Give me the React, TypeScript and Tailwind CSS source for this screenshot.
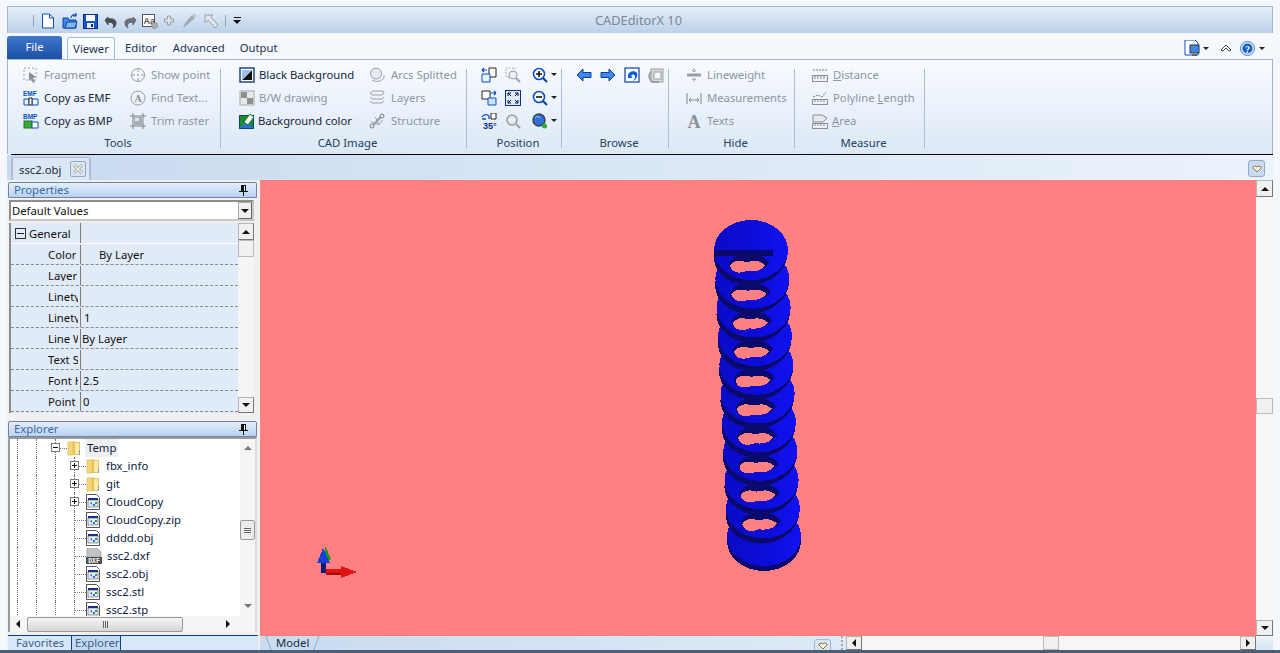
import type { ReactNode } from "react";

const FONT = "font-['Noto_Sans','Open_Sans',sans-serif]";

// --- small drawn icons ---
function Ic({ children, w = 16 }: { children: ReactNode; w?: number }) {
  return (
    <svg width={w} height={16} viewBox={`0 0 ${w} 16`} className="shrink-0" fill="none">
      {children}
    </svg>
  );
}

const G = "#9a9fa6";
const B = "#0a4fc4";

const icons: Record<string, ReactNode> = {
  fragment: (
    <>
      <rect x="1" y="1" width="12" height="12" stroke={G} strokeDasharray="2 2" />
      <path d="M6 5l7 5-3 1 2 4-2 1-2-4-2 2z" fill="#8b8f96" />
    </>
  ),
  emf: (
    <>
      <text x="0" y="6" fontSize="6.5" fontWeight="700" fill={B} fontFamily="Liberation Sans">EMF</text>
      <path d="M1 9h5v6H1zM9 9h6v6H9zM6 12h3" stroke={B} />
      <path d="M6 8h3v7H6z" fill="#fff" stroke="#222" />
    </>
  ),
  bmp: (
    <>
      <text x="0" y="6" fontSize="6.5" fontWeight="700" fill={B} fontFamily="Liberation Sans">BMP</text>
      <rect x="1" y="8" width="8" height="7" fill="#3da83a" stroke="#1a7a1a" />
      <path d="M9 9h6v6H9z" stroke={B} fill="#fff" />
    </>
  ),
  point: (
    <>
      <circle cx="8" cy="8" r="6.5" stroke={G} />
      <path d="M8 1v4M8 11v4M1 8h4M11 8h4" stroke={G} />
      <circle cx="8" cy="8" r="1" fill={G} />
    </>
  ),
  find: (
    <>
      <circle cx="8" cy="8" r="7" stroke={G} />
      <circle cx="8" cy="8" r="5.5" fill="#eef2f7" />
      <text x="8" y="12" textAnchor="middle" fontSize="10" fontWeight="700" fill="#8b8f96" fontFamily="Liberation Serif">A</text>
    </>
  ),
  trim: (
    <>
      <path d="M3 0v16M13 0v16M0 3h16M0 13h16" stroke="#7e8388" />
      <rect x="4" y="4" width="8" height="8" fill="#a8adb3" />
      <rect x="5" y="5" width="4" height="3" fill="#e4e7ea" />
    </>
  ),
  black: (
    <>
      <rect x="1" y="1" width="14" height="14" fill="#fff" stroke="#123a7c" strokeWidth="1.4" />
      <path d="M3 13L13 3v10z" fill="#111" />
      <path d="M3 3h10L3 13z" fill="#9cc0ee" />
    </>
  ),
  bw: (
    <>
      <rect x="1" y="1" width="14" height="14" fill="#e8e8e8" stroke="#a5a8ac" />
      <rect x="2" y="2" width="6" height="6" fill="#8d8f92" />
      <rect x="8" y="8" width="6" height="6" fill="#8d8f92" />
    </>
  ),
  bgcolor: (
    <>
      <rect x="0.5" y="2.5" width="14" height="13" fill="#1d8a2e" stroke="#0a3f9c" />
      <path d="M1 15l6-6 7 6z" fill="#2f6fd8" />
      <path d="M5 9l6-8 4 3-6 8z" fill="#fff" stroke="#1a7a1a" />
    </>
  ),
  arcs: (
    <>
      <circle cx="7" cy="6.5" r="5.5" fill="#e6eaee" stroke={G} />
      <path d="M3 13c3 2 8 2 11-1 1-1 1-2 1-4" stroke={G} />
    </>
  ),
  layers: (
    <>
      <path d="M1 3l3-2h10l1 2-2 2H3z M1 7l2 2h10l2-2M1 11l2 2h10l2-2" stroke={G} fill="#eef1f5" />
    </>
  ),
  structure: (
    <>
      <path d="M1 14C5 14 11 2 15 2" stroke={G} strokeWidth="2" />
      <path d="M2 9c3 0 9 6 11-2M6 4c2 2 3 6 4 8" stroke={G} />
      <circle cx="3" cy="13" r="2" fill="#e6eaee" stroke="#7e8388" />
      <circle cx="13" cy="3" r="2" fill="#e6eaee" stroke="#7e8388" />
    </>
  ),
  pos1: (
    <>
      <path d="M8 1h7v9H8z" fill="#fff" stroke="#222" />
      <path d="M1 7h8v8H1z" fill="#e6f1ff" stroke={B} />
      <path d="M1 3h5M1 3l2-2M1 3l2 2" stroke={B} strokeWidth="1.2" />
    </>
  ),
  pos2: (
    <>
      <path d="M1 1h8v8H1z" fill="#fff" stroke="#222" />
      <path d="M7 8h8v7H7z" fill="#cfe2fb" stroke={B} />
      <path d="M10 3h5M15 3l-2-2M15 3l-2 2" stroke={B} strokeWidth="1.2" />
    </>
  ),
  pos3: (
    <>
      <path d="M10 0h5v6h-5z" fill="#fff" stroke="#222" />
      <path d="M1 4c2-3 5-3 7-1M1 6l4 0M8 3v3" stroke={B} strokeWidth="1.3" />
      <text x="2" y="15.5" fontSize="9" fontWeight="700" fill="#0a2f8c" fontFamily="Liberation Sans">35°</text>
    </>
  ),
  zwin: (
    <>
      <rect x="1" y="1" width="9" height="9" stroke={G} strokeDasharray="1.5 1.5" />
      <circle cx="8" cy="8" r="4" fill="#edf1f5" stroke={G} />
      <path d="M11 11l4 4" stroke={G} strokeWidth="2" />
    </>
  ),
  fit: (
    <>
      <rect x="0.5" y="0.5" width="15" height="15" fill="#dbe9fb" stroke="#0a2f8c" />
      <path d="M3 3l3 3M3 3h3M3 3v3M13 3l-3 3M13 3h-3M13 3v3M3 13l3-3M3 13h3M3 13v-3M13 13l-3-3M13 13h-3M13 13v-3" stroke="#111" />
    </>
  ),
  zprev: (
    <>
      <circle cx="7" cy="7" r="5" fill="#e4e7ea" stroke={G} strokeWidth="1.6" />
      <path d="M11 11l4 4" stroke={G} strokeWidth="2" />
      <path d="M4 7h6l-2-2" stroke="#fff" />
    </>
  ),
  zin: (
    <>
      <circle cx="7" cy="7" r="5.5" fill="#fff" stroke={B} strokeWidth="1.6" />
      <path d="M4 7h6M7 4v6" stroke="#111" strokeWidth="1.6" />
      <path d="M11 11l4 4" stroke="#0a3f9c" strokeWidth="2.2" />
    </>
  ),
  zout: (
    <>
      <circle cx="7" cy="7" r="5.5" fill="#fff" stroke={B} strokeWidth="1.6" />
      <path d="M4 7h6" stroke="#111" strokeWidth="1.6" />
      <path d="M11 11l4 4" stroke="#0a3f9c" strokeWidth="2.2" />
    </>
  ),
  zglobe: (
    <>
      <circle cx="7" cy="7" r="6" fill="#2f6fd8" stroke="#3a3f46" strokeWidth="1.4" />
      <path d="M3 5c2-2 4-2 5 0" stroke="#bcd6f8" />
      <path d="M11 11l3 3" stroke="#3a3f46" strokeWidth="2" />
      <circle cx="12.5" cy="13" r="2.5" fill="#2fb02f" />
    </>
  ),
  left: <path d="M1 8l6-6v3.5h8v5H7V14z" fill="#3f86e6" stroke="#0a3f9c" />,
  right: <path d="M15 8L9 2v3.5H1v5h8V14z" fill="#3f86e6" stroke="#0a3f9c" />,
  back: (
    <>
      <rect x="1" y="1" width="14" height="14" fill="#fff" stroke="#0a3f9c" strokeWidth="1.2" />
      <path d="M4 9c0-5 7-6 9-3 1 3-1 7-4 8 2-2 3-5 1-6-1-1-2 0-3 1l2 2H4z" fill="#0a5fd8" />
    </>
  ),
  fwd: (
    <>
      <rect x="3" y="2" width="12" height="13" fill="#d6d9dd" stroke={G} />
      <path d="M3 5c-3 3-2 8 2 10h6" stroke={G} strokeWidth="2" />
      <rect x="6" y="5" width="7" height="7" fill="#f3f5f7" stroke={G} />
    </>
  ),
  lweight: (
    <>
      <path d="M1 8h14" stroke={G} strokeWidth="3" />
      <path d="M8 1v4M6 3l2 2 2-2M8 15v-4M6 13l2-2 2 2" stroke={G} />
    </>
  ),
  measure: <path d="M1 3v11M15 3v11M3 10h10M3 10l2-2M3 10l2 2M13 10l-2-2M13 10l-2 2" stroke="#83878d" />,
  texts: (
    <text x="8" y="15" textAnchor="middle" fontSize="18" fontWeight="700" fill="#8b8f96" fontFamily="Liberation Serif">A</text>
  ),
  distance: (
    <>
      <path d="M1 3h14" stroke="#777" strokeDasharray="2 1" />
      <rect x="0.5" y="8.5" width="15" height="6" fill="#eef1f5" stroke="#8b8f96" />
      <path d="M3 9v3M6 9v3M9 9v3M12 9v3" stroke="#8b8f96" />
    </>
  ),
  polyline: (
    <>
      <path d="M1 7l5-2 4 2 4-5" stroke="#777" strokeDasharray="2 1" />
      <rect x="0.5" y="9.5" width="15" height="5" fill="#eef1f5" stroke="#8b8f96" />
      <path d="M3 10v2M6 10v2M9 10v2M12 10v2" stroke="#8b8f96" />
    </>
  ),
  area: (
    <>
      <path d="M1 2h9l5 3-4 4H1z" fill="#e6e9ed" stroke="#8b8f96" />
      <rect x="0.5" y="10.5" width="15" height="5" fill="#eef1f5" stroke="#8b8f96" />
      <path d="M3 11v2M6 11v2M9 11v2M12 11v2" stroke="#8b8f96" />
    </>
  ),
};

function Icon({ name }: { name: string }) {
  return <Ic>{icons[name]}</Ic>;
}

function DropTri({ cls = "ml-[3px]" }: { cls?: string }) {
  return <span className={`h-0 w-0 shrink-0 border-x-[3px] border-t-[3px] border-x-transparent border-t-[#222] ${cls}`} />;
}

function Item({ icon, label, off, gap = "gap-[5px]" }: { icon: string; label: ReactNode; off?: boolean; gap?: string }) {
  return (
    <div className={`flex h-[23px] items-center whitespace-nowrap ${gap} ${off ? "text-[#8d96a3]" : "text-[#17263a]"}`}>
      <Icon name={icon} />
      <span>{label}</span>
    </div>
  );
}

function Group({ title, width, pl, children }: { title: string; width: string; pl: string; children: ReactNode }) {
  return (
    <>
      <div className={`flex shrink-0 flex-col ${width}`}>
        <div className={`flex h-[74px] ${pl}`}>{children}</div>
        <div className="flex h-[18px] items-center justify-center pl-[8px] text-[#24405f]">{title}</div>
      </div>
      <div className="mb-[6px] mt-[9px] w-px shrink-0 bg-[#a9bdd3]" />
    </>
  );
}

function Col({ width, children }: { width?: string; children: ReactNode }) {
  return <div className={`flex flex-col ${width ?? ""}`}>{children}</div>;
}

// --- scroll bars ---
function Arrow({ dir, off }: { dir: "up" | "down" | "left" | "right"; off?: boolean }) {
  const c = off ? "#777" : "#111";
  const d = { up: "M4 0l4 4H0z", down: "M0 0h8L4 4z", left: "M4 0v8L0 4z", right: "M0 0v8l4-4z" }[dir];
  const s = dir === "up" || dir === "down" ? [8, 4] : [4, 8];
  return (
    <svg width={s[0]} height={s[1]} viewBox={`0 0 ${s[0]} ${s[1]}`}>
      <path d={d} fill={c} />
    </svg>
  );
}

function SBtn({ dir, cls }: { dir: "up" | "down" | "left" | "right"; cls: string }) {
  return (
    <div className={`flex shrink-0 items-center justify-center border border-[#b5b5b5] border-b-[#777] border-r-[#777] bg-[#f0f0f0] ${cls}`}>
      <Arrow dir={dir} />
    </div>
  );
}

// --- left panel ---
function PanelHead({ title }: { title: string }) {
  return (
    <div className="ml-px flex h-[16px] w-[249px] items-center justify-between rounded-t-[2px] border border-[#71849c] bg-gradient-to-b from-[#e3eefb] to-[#b9d2f2] pl-[5px] pr-[8px] text-[#3a6ba5]">
      <span>{title}</span>
      <svg width="9" height="11" viewBox="0 0 9 11">
        <path d="M2 0h5v6h2v1H5v4H4V7H0V6h2z" fill="#111" />
        <path d="M5 1h1v5H5z" fill="#fff" />
      </svg>
    </div>
  );
}

const props: [string, string, string?][] = [
  ["Color", "By Layer", "pl-[18px]"],
  ["Layer", ""],
  ["Linetype", ""],
  ["Linetype scale", "1", "pl-[3px]"],
  ["Line Weight", "By Layer"],
  ["Text Style", ""],
  ["Font Height", "2.5", "pl-[2px]"],
  ["Point display", "0", "pl-[2px]"],
];

function FolderIc() {
  return (
    <svg width="14" height="16" viewBox="0 0 14 16" className="shrink-0">
      <path d="M1 2h5v13H1z" fill="#f5d77a" stroke="#d8b04a" strokeWidth="0.6" />
      <path d="M6 1l3 1h4v13H6z" fill="#e9c25a" />
      <path d="M8 3h4v11H8z" fill="#fbe9a8" />
      <path d="M12 10h1v5h-1z" fill="#7a9cc6" />
    </svg>
  );
}

function ObjIc() {
  return (
    <svg width="14" height="16" viewBox="0 0 14 16" className="shrink-0">
      <path d="M0.5 0.5h10l3 3v12H0.5z" fill="#fff" stroke="#555" />
      <rect x="2" y="4" width="10" height="2" fill="#1a2f8c" />
      <rect x="2" y="6" width="10" height="7" fill="#e8eef8" stroke="#333" strokeWidth="0.5" />
      <path d="M4 9l2-1v3zM7 10h2v2H7z" fill="#1d6fd8" />
      <path d="M9 8h2v2H9z" fill="#2aa02a" />
    </svg>
  );
}

function DxfIc() {
  return (
    <svg width="16" height="16" viewBox="0 0 16 16" className="shrink-0">
      <path d="M1 0h10l4 4v5H1z" fill="#c2c4c7" stroke="#8a8c90" strokeWidth="0.6" />
      <rect x="0" y="9" width="16" height="7" fill="#4c4e52" />
      <text x="8" y="15" textAnchor="middle" fontSize="6.5" fontWeight="700" fill="#fff" fontFamily="Liberation Mono">DXF</text>
    </svg>
  );
}

function TreeRow({ depth, exp, kind, label, sel }: { depth: number; exp?: "+" | "-"; kind: "folder" | "obj" | "dxf"; label: string; sel?: boolean }) {
  return (
    <div className="flex h-[18px] shrink-0 items-center pl-[7px]">
      {Array.from({ length: depth }).map((_, i) => (
        <div key={i} className="h-full w-[19px] shrink-0 border-l border-dotted border-[#777]" />
      ))}
      <div className="relative h-full w-[12px] shrink-0 border-l border-dotted border-[#777]">
        <div className="mt-[9px] w-full border-t border-dotted border-[#777]" />
        {exp && (
          <div className="absolute left-[-5px] top-[4px] flex h-[9px] w-[9px] items-center justify-center border border-[#777] bg-white">
            <div className="h-px w-[5px] bg-[#111]" />
            {exp === "+" && <div className="absolute h-[5px] w-px bg-[#111]" />}
          </div>
        )}
      </div>
      {kind === "folder" && <FolderIc />}
      {kind === "obj" && <ObjIc />}
      {kind === "dxf" && <DxfIc />}
      <span className={`whitespace-nowrap text-[#0b1c3f] ${sel ? "ml-[4px] bg-[#efefef] px-[2px] py-[3px]" : kind === "dxf" ? "ml-[5px]" : "ml-[6px]"}`}>{label}</span>
    </div>
  );
}

function LeftPanel() {
  return (
    <div className="flex w-[253px] shrink-0 flex-col bg-[#f0f0f0] pt-[2px]">
      <PanelHead title="Properties" />
      <div className="ml-[2px] mt-[2px] flex h-[21px] w-[245px] items-center justify-between border-2 border-[#8d8d8d] border-b-[#c8c8c8] border-r-[#c8c8c8] bg-white pl-[1px] text-[#111]">
        <span>Default Values</span>
        <div className="flex h-[17px] w-[14px] items-center justify-center border border-[#aaa] border-b-[#666] border-r-[#666] bg-[#f0f0f0]">
          <Arrow dir="down" />
        </div>
      </div>
      <div className="ml-[2px] mt-[2px] flex h-[190px] w-[245px] border-l-2 border-[#8d8d8d]">
        <div className="flex w-[227px] flex-col bg-[#e1ebf7]">
          <div className="flex h-[21px] shrink-0 border-b border-white">
            <div className="flex w-[70px] shrink-0 items-center gap-[3px] border-r border-[#7d7d7d] pl-[4px] pt-px text-[#111]">
              <div className="flex h-[11px] w-[11px] items-center justify-center border border-[#333]">
                <div className="h-px w-[7px] bg-[#222]" />
              </div>
              General
            </div>
          </div>
          {props.map(([name, value, cls]) => (
            <div key={name} className="flex h-[21px] shrink-0 border-b border-dashed border-[#858b93] pt-px text-[#111]">
              <div className="flex w-[70px] shrink-0 items-center border-r border-[#7d7d7d] pl-[37px] pr-[2px]">
                <span className="min-w-0 overflow-hidden whitespace-nowrap">{name}</span>
              </div>
              <div className={`flex items-center pl-[1px] ${cls ?? ""}`}>{value}</div>
            </div>
          ))}
        </div>
        <div className="flex w-[16px] flex-col bg-[#f5f5f5]">
          <SBtn dir="up" cls="h-[17px]" />
          <div className="h-[17px] shrink-0 border border-[#bbb] bg-[#f0f0f0]" />
          <div className="flex-1" />
          <SBtn dir="down" cls="h-[16px]" />
        </div>
      </div>
      <div className="mt-[8px]">
        <PanelHead title="Explorer" />
      </div>
      <div className="ml-px flex h-[195px] w-[249px] flex-col border-2 border-b-0 border-[#9a9a9a] border-r-[#ddd] bg-white">
        <div className="flex h-[177px] shrink-0">
          <div className="flex w-[230px] flex-col overflow-hidden">
            <TreeRow depth={2} exp="-" kind="folder" label="Temp" sel />
            <TreeRow depth={3} exp="+" kind="folder" label="fbx_info" />
            <TreeRow depth={3} exp="+" kind="folder" label="git" />
            <TreeRow depth={3} exp="+" kind="obj" label="CloudCopy" />
            <TreeRow depth={3} kind="obj" label="CloudCopy.zip" />
            <TreeRow depth={3} kind="obj" label="dddd.obj" />
            <TreeRow depth={3} kind="dxf" label="ssc2.dxf" />
            <TreeRow depth={3} kind="obj" label="ssc2.obj" />
            <TreeRow depth={3} kind="obj" label="ssc2.stl" />
            <TreeRow depth={3} kind="obj" label="ssc2.stp" />
          </div>
          <div className="flex w-[15px] flex-col items-center bg-[#f5f5f5] pt-[7px]">
            <Arrow dir="up" off />
            <div className="mt-[70px] flex h-[20px] w-[15px] flex-col items-center justify-center gap-px rounded-[2px] border border-[#999] bg-[#ececec]">
              <div className="h-px w-[7px] bg-[#666]" />
              <div className="h-px w-[7px] bg-[#666]" />
              <div className="h-px w-[7px] bg-[#666]" />
            </div>
            <div className="flex-1" />
            <div className="mb-[8px]">
              <Arrow dir="down" off />
            </div>
          </div>
        </div>
        <div className="flex h-[16px] shrink-0 items-center bg-[#f5f5f5] pl-[6px] pr-[25px]">
          <Arrow dir="left" />
          <div className="ml-[7px] flex h-[15px] w-[156px] items-center justify-center gap-px rounded-[2px] border border-[#999] bg-gradient-to-b from-[#f5f5f5] to-[#d6d6d6]">
            <div className="h-[7px] w-px bg-[#666]" />
            <div className="h-[7px] w-px bg-[#666]" />
            <div className="h-[7px] w-px bg-[#666]" />
          </div>
          <div className="flex-1" />
          <Arrow dir="right" />
        </div>
      </div>
      <div className="ml-px mt-[3px] flex h-[15px] w-[250px] border-t border-[#0d3f9f] bg-[#d8e7f9] text-[#3a5f8f]">
        <div className="flex w-[63px] items-center pl-[8px]">Favorites</div>
        <div className="flex w-[50px] items-center border-x border-[#0d3f9f] bg-[#c4daf3] pl-[3px]">Explorer</div>
      </div>
    </div>
  );
}

// --- the model on the canvas ---
function Spring() {
  const coils = Array.from({ length: 10 }, (_, i) => i);
  return (
    <svg viewBox="260 180 996 456" className="h-full w-full" shapeRendering="crispEdges">
      <defs>
        <linearGradient id="coil" x1="0" x2="1" y1="0" y2="0">
          <stop offset="0" stopColor="#0b0bc8" />
          <stop offset="0.6" stopColor="#0d0ddc" />
          <stop offset="1" stopColor="#1212f2" />
        </linearGradient>
      </defs>
      <ellipse cx="764" cy="541" rx="37" ry="30" fill="#0a0a6e" />
      <ellipse cx="764" cy="536" rx="37" ry="30" fill="url(#coil)" />
      {coils
        .slice()
        .reverse()
        .map((i) => {
          const cx = 751 + i * 1.33;
          const cy = 250 + i * 28.7;
          return (
            <g key={i}>
              <ellipse cx={cx - 1} cy={cy + 5} rx="37" ry="30" fill="#0a0a6e" transform={`rotate(-8 ${cx} ${cy})`} />
              <ellipse cx={cx} cy={cy} rx="37" ry="30" fill="url(#coil)" />
              <path d={`M${cx - 22} ${cy + 16} A20 11 0 0 1 ${cx + 18} ${cy + 14} L${cx + 13} ${cy + 18} L${cx - 20} ${cy + 20}z`} fill="#0a0a6e" />
              <path
                d={`M${cx - 21} ${cy + 16} C${cx - 18} ${cy + 10} ${cx - 10} ${cy + 10} ${cx - 5} ${cy + 12} C${cx} ${cy + 12} ${cx + 5} ${cy + 8} ${cx + 14} ${cy + 15} C${cx + 11} ${cy + 21} ${cx + 3} ${cy + 22} ${cx - 4} ${cy + 21} C${cx - 12} ${cy + 24} ${cx - 19} ${cy + 23} ${cx - 21} ${cy + 16}z`}
                fill="#ff8080"
              />
            </g>
          );
        })}
      <rect x="714" y="250" width="59" height="6" fill="#0a0a6e" />
      {/* axis gizmo */}
      <path d="M325 546l6 13-5 2z" fill="#0e9a1e" />
      <path d="M323 548l7 15h-13z" fill="#1840d8" />
      <rect x="321" y="563" width="5" height="10" fill="#0a1e78" />
      <path d="M326 569h15v-3l16 6-16 6v-3h-15z" fill="#e01414" />
      <path d="M326 573h15v2h-15z" fill="#a00e0e" />
    </svg>
  );
}

export default function App() {
  return (
    <div className={`flex h-[653px] w-[1280px] flex-col overflow-hidden bg-[#f4f7fc] text-[11.3px] leading-none ${FONT}`}>
      <div className="flex shrink-0 flex-col pl-[7px] pr-[7px] pt-[6px]">
        {/* title bar */}
        <div className="flex h-[27px] shrink-0 items-center border-x border-t border-[#a3b8cf] bg-gradient-to-b from-[#e4eef9] to-[#bcd1e9] pt-[1px]">
          <div className="flex w-[587px] shrink-0 items-center pl-[25px]">
            <div className="mr-[7px] h-[12px] w-px bg-[#8ea4bd]" />
            <Ic w={14}>
              <path d="M1.5 1h7l4 4v10h-11z" fill="#fff" stroke="#0a4fc4" />
              <path d="M8.5 1v4h4" stroke="#0a4fc4" />
            </Ic>
            <div className="ml-[7px]">
              <Ic>
                <path d="M1 5h5l1 2h7v8H1z" fill="#3f8ae8" stroke="#0a3f9c" />
                <path d="M3 15l2-6h10l-2 6z" fill="#7fb6f5" stroke="#0a3f9c" />
                <path d="M9 5c0-3 3-4 5-3M14 0v3h-3" stroke="#0a4fc4" strokeWidth="1.2" />
              </Ic>
            </div>
            <div className="ml-[5px]">
              <Ic w={15}>
                <rect x="0.5" y="1.5" width="14" height="14" fill="#1457c8" stroke="#0a2f8c" />
                <rect x="3" y="2" width="9" height="6" fill="#fff" />
                <rect x="4" y="10" width="7" height="5" fill="#e8eef8" />
                <rect x="8" y="11" width="2" height="3" fill="#0a2f8c" />
              </Ic>
            </div>
            <div className="ml-[5px]">
              <Ic w={15}>
                <path d="M2 7l3-3v2c5-1 8 1 8 4 0 2-1 4-3 5 1-2 1-4-1-5-1-1-3-1-4 0v2z" fill="#4a4f57" stroke="#4a4f57" />
              </Ic>
            </div>
            <div className="ml-[5px]">
              <Ic w={15}>
                <path d="M13 7l-3-3v2C5 5 2 7 2 10c0 2 1 4 3 5-1-2-1-4 1-5 1-1 3-1 4 0v2z" fill="#6a6f77" stroke="#6a6f77" />
              </Ic>
            </div>
            <div className="ml-[4px]">
              <Ic>
                <rect x="0.5" y="1.5" width="12" height="12" fill="#fff" stroke="#555" />
                <text x="1.5" y="11" fontSize="9" fontWeight="700" fill="#555" fontFamily="Liberation Sans">Aa</text>
                <circle cx="12.5" cy="12.5" r="3" fill="#a9adb2" stroke="#666" strokeDasharray="1 1" />
              </Ic>
            </div>
            <div className="ml-[5px]">
              <Ic w={12}>
                <path d="M4.5 3h3v3h3v3h-3v3h-3V9h-3V6h3z" fill="#dde4ec" stroke={G} />
              </Ic>
            </div>
            <div className="ml-[7px]">
              <Ic>
                <path d="M1 15l2-5 7-8 3 3-8 7z" fill="#a4a9af" />
                <path d="M10 2l2-2 3 3-2 2z" fill="#c6cad0" />
              </Ic>
            </div>
            <div className="ml-[5px]">
              <Ic>
                <path d="M2 2h8L8 4l7 8-3 3-7-8-3 3z" fill="#dfe5ec" stroke={G} />
              </Ic>
            </div>
            <div className="ml-[6px] h-[12px] w-px bg-[#8ea4bd]" />
            <div className="ml-[7px] flex flex-col items-center gap-[2px]">
              <div className="h-px w-[7px] bg-[#111]" />
              <div className="h-0 w-0 border-x-[4px] border-t-[4px] border-x-transparent border-t-[#111]" />
            </div>
          </div>
          <span className="text-[12.8px] text-[#7d8794]">CADEditorX 10</span>
        </div>

        {/* ribbon tabs */}
        <div className="flex h-[26px] shrink-0 items-end bg-[#f5f9fe]">
          <div className="flex h-[23px] w-[55px] items-center justify-center rounded-t-[3px] bg-gradient-to-b from-[#3f78cc] to-[#1c4fa6] pb-[2px] text-white">
            File
          </div>
          <div className="ml-[5px] flex h-[22px] w-[48px] items-center justify-center rounded-t-[3px] border-x border-t border-[#9cc0dc] bg-gradient-to-b from-[#fff] to-[#f4f9fe] text-[#1d3350]">
            Viewer
          </div>
          <div className="flex h-[22px] flex-1 items-center pl-[10px] text-[#1d3350]">
            <span>Editor</span>
            <span className="ml-[16px]">Advanced</span>
            <span className="ml-[15px]">Output</span>
            <div className="flex-1" />
            <Ic>
              <path d="M1 0h10l3 3v12H1z" fill="#fff" stroke="#0a4fc4" />
              <rect x="6" y="5" width="9" height="8" fill="#3f8ae8" stroke="#333" />
              <path d="M8 14h5v2H8z" fill="#666" />
            </Ic>
            <DropTri />
            <svg width="12" height="8" viewBox="0 0 12 8" className="ml-[11px] shrink-0">
              <path d="M1 6l5-5 5 5-2 1-3-3-3 3z" fill="#fff" stroke="#444" />
            </svg>
            <svg width="15" height="15" viewBox="0 0 15 15" className="ml-[8px] shrink-0">
              <circle cx="7.5" cy="7.5" r="7" fill="#dbe9fb" stroke="#4a80c8" />
              <circle cx="7.5" cy="7.5" r="5" fill="#1a5fc8" />
              <text x="7.5" y="11.5" textAnchor="middle" fontSize="10" fontWeight="700" fill="#fff" fontFamily="Liberation Serif">?</text>
            </svg>
            <DropTri cls="ml-[4px] mr-[8px]" />
          </div>
        </div>

        {/* ribbon body */}
        <div className="flex h-[95px] shrink-0 border border-b-0 border-[#a3b5c9] bg-gradient-to-b from-[#f8fbff] to-[#dce8f6]">
          <Group title="Tools" width="w-[212px]" pl="pl-[15px] pt-[3px]">
            <Col width="w-[107px]">
              <Item icon="fragment" label="Fragment" off />
              <Item icon="emf" label="Copy as EMF" />
              <Item icon="bmp" label="Copy as BMP" />
            </Col>
            <Col>
              <Item icon="point" label="Show point" off />
              <Item icon="find" label="Find Text..." off />
              <Item icon="trim" label="Trim raster" off />
            </Col>
          </Group>
          <Group title="CAD Image" width="w-[245px]" pl="pl-[18px] pt-[3px]">
            <Col width="w-[130px]">
              <Item icon="black" label="Black Background" gap="gap-[4px]" />
              <Item icon="bw" label="B/W drawing" off gap="gap-[4px]" />
              <Item icon="bgcolor" label="Background color" gap="gap-[3px]" />
            </Col>
            <Col>
              <Item icon="arcs" label="Arcs Splitted" off gap="gap-[6px]" />
              <Item icon="layers" label="Layers" off gap="gap-[6px]" />
              <Item icon="structure" label="Structure" off gap="gap-[6px]" />
            </Col>
          </Group>
          <Group title="Position" width="w-[94px]" pl="pl-[14px] pt-[3px]">
            <Col width="w-[24px]">
              <Item icon="pos1" label="" />
              <Item icon="pos2" label="" />
              <Item icon="pos3" label="" />
            </Col>
            <Col width="w-[27px]">
              <Item icon="zwin" label="" />
              <Item icon="fit" label="" />
              <Item icon="zprev" label="" />
            </Col>
            <Col>
              <div className="flex h-[23px] items-center"><Icon name="zin" /><DropTri /></div>
              <div className="flex h-[23px] items-center"><Icon name="zout" /><DropTri /></div>
              <div className="flex h-[23px] items-center"><Icon name="zglobe" /><DropTri /></div>
            </Col>
          </Group>
          <Group title="Browse" width="w-[106px]" pl="pl-[14px] pt-[3px]">
            <div className="flex h-[23px] items-center gap-[8px]">
              <Icon name="left" />
              <Icon name="right" />
              <Icon name="back" />
              <Icon name="fwd" />
            </div>
          </Group>
          <Group title="Hide" width="w-[125px]" pl="pl-[17px] pt-[3px]">
            <Col>
              <Item icon="lweight" label="Lineweight" off />
              <Item icon="measure" label="Measurements" off />
              <Item icon="texts" label="Texts" off />
            </Col>
          </Group>
          <Group title="Measure" width="w-[129px]" pl="pl-[17px] pt-[3px]">
            <Col>
              <Item icon="distance" label={<><u>D</u>istance</>} off />
              <Item icon="polyline" label={<>Polyline <u>L</u>ength</>} off />
              <Item icon="area" label={<><u>A</u>rea</>} off gap="gap-[4px]" />
            </Col>
          </Group>
        </div>
      </div>

      <div className="ml-[11px] mr-[7px] h-px shrink-0 bg-black" />

      {/* page area */}
      <div className="flex shrink-0 flex-col pl-[7px] pr-[7px]">
        {/* document tabs */}
        <div className="flex h-[25px] shrink-0 items-end bg-gradient-to-r from-[#c8daef] to-[#ebf3fc] pl-[4px] pr-[8px]">
          <div className="flex h-[23px] w-[80px] items-center rounded-t-[3px] border-x-2 border-t border-[#aebfd3] bg-[#dbe7f5] pl-[6px] text-[#1b2a3d]">
            <span className="w-[51px] shrink-0 pt-px">ssc2.obj</span>
            <div className="flex h-[16px] w-[16px] items-center justify-center rounded-[2px] border border-[#93a9c2] bg-[#d9e6f5]">
              <svg width="10" height="10" viewBox="0 0 10 10">
                <path d="M1 1l8 8M9 1l-8 8" stroke="#8a8f70" strokeWidth="2.6" />
                <path d="M1 1l8 8M9 1l-8 8" stroke="#fff" strokeWidth="1.2" />
              </svg>
            </div>
          </div>
          <div className="flex-1" />
          <div className="mb-[3px] flex h-[17px] w-[17px] items-center justify-center rounded-[3px] border border-[#93a9c2] bg-[#c9dbf2]">
            <svg width="10" height="8" viewBox="0 0 10 8">
              <path d="M1 2l2-1 2 1 2-1 2 1v1L5 7 1 3z" fill="#fff" stroke="#8a7420" />
            </svg>
          </div>
        </div>

        <div className="flex h-[470px] shrink-0">
          <LeftPanel />
          <div className="flex min-w-0 flex-1 flex-col">
            <div className="flex h-[456px] shrink-0">
              <div className="min-w-0 flex-1 bg-[#ff8080]">
                <Spring />
              </div>
              <div className="flex w-[17px] shrink-0 flex-col bg-[#f6f6f6]">
                <SBtn dir="up" cls="h-[17px]" />
                <div className="flex-1" />
                <div className="h-[16px] shrink-0 border border-[#bbb] bg-[#f0f0f0]" />
                <div className="h-[206px] shrink-0" />
                <SBtn dir="down" cls="h-[16px]" />
              </div>
            </div>
            <div className="flex h-[14px] shrink-0 overflow-hidden bg-gradient-to-r from-[#c9dbef] to-[#ecf4fd]">
              <svg width="16" height="14" viewBox="0 0 16 14" className="ml-[5px] shrink-0">
                <path d="M1 0l5 14" stroke="#9aa9ba" />
              </svg>
              <span className="ml-[-5px] flex w-[32px] items-center text-[#1b2a3d]">Model</span>
              <svg width="10" height="14" viewBox="0 0 10 14" className="ml-[4px] shrink-0">
                <path d="M7 0L2 14" stroke="#9aa9ba" />
              </svg>
              <div className="flex-1" />
              <div className="mt-[3px] flex h-[17px] w-[17px] shrink-0 items-start justify-center rounded-[3px] border border-[#a4b6cc] bg-[#dbe7f6] pt-[2px]">
                <svg width="10" height="8" viewBox="0 0 10 8">
                  <path d="M1 2l2-1 2 1 2-1 2 1v1L5 7 1 3z" fill="#fff" stroke="#8a7420" />
                </svg>
              </div>
              <div className="ml-[10px] mr-[3px] h-full w-[2px] border-l-2 border-dotted border-[#9aa9ba]" />
              <div className="flex w-[410px] shrink-0 bg-[#f6f6f6]">
                <SBtn dir="left" cls="w-[16px]" />
                <div className="w-[181px] shrink-0" />
                <div className="w-[16px] shrink-0 border border-[#bbb] bg-[#f0f0f0]" />
                <div className="flex-1" />
                <SBtn dir="right" cls="w-[16px]" />
              </div>
              <div className="w-[17px] shrink-0 bg-gradient-to-b from-[#eef4fb] to-[#d6e4f4]" />
            </div>
          </div>
        </div>
      </div>
      <div className="h-[3px] shrink-0 bg-[#4a6078]" />
    </div>
  );
}
